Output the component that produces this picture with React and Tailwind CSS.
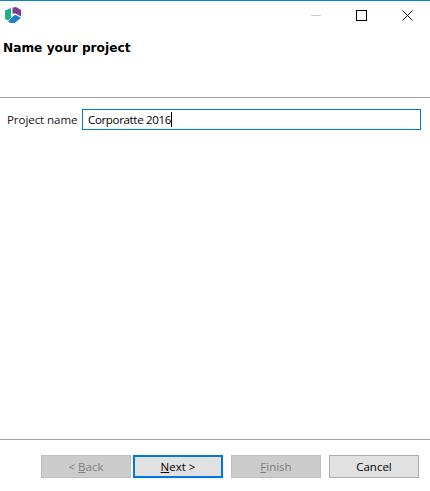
import React from "react";

function WizardButton({ children, disabled, primary, className = "" }) {
  return (
    <button
      disabled={disabled}
      className={`w-[90px] h-[23px] flex items-center justify-center text-[11.5px] leading-none ${
        disabled
          ? "bg-[#cccccc] border border-[#bfbfbf] text-[#7f7f7f]"
          : primary
            ? "bg-[#e1e1e1] border-2 border-[#0078d7] text-black"
            : "bg-[#e1e1e1] border border-[#adadad] text-black"
      } ${className}`}
    >
      {children}
    </button>
  );
}

function Logo() {
  return (
    <svg width="18" height="18" viewBox="4 6 18 18">
      <path d="M5 10.5 L11 8 L11 15 L11.5 17.5 L8 20.5 L5 19 Z" fill="#20b089" />
      <path d="M12.5 7.5 L16 7 L21 10 L21 16.5 L15.5 13.5 L12.5 13.5 Z" fill="#7d3c98" />
      <path d="M14.5 15 L16 15 L21 18 L14.5 23 L10.5 23 L8 21.5 Z" fill="#1e7fc9" />
    </svg>
  );
}

export default function App() {
  return (
    <div className="w-[430px] h-[491px] flex flex-col bg-white border-t border-[#0a84d8] font-['Open_Sans','Noto_Sans',sans-serif] text-[11.5px] text-black overflow-hidden">
      {/* Title bar */}
      <div className="h-[28px] flex items-center justify-between pl-[4px]">
        <Logo />
        <div className="flex items-center">
          <div className="w-[46px] flex justify-center pl-px">
            <div className="w-[10px] h-px bg-[#cccccc]" />
          </div>
          <div className="w-[46px] flex justify-center">
            <div className="w-[11px] h-[11px] border border-black" />
          </div>
          <div className="w-[46px] flex justify-center">
            <svg width="11" height="11" viewBox="0 0 11 11">
              <path d="M0.5 0.5 L10.5 10.5 M10.5 0.5 L0.5 10.5" stroke="#111" strokeWidth="1" fill="none" />
            </svg>
          </div>
        </div>
      </div>

      {/* Header */}
      <div className="h-[69px] border-b border-[#a0a0a0] pl-[3px] pt-[11px]">
        <h1 className="font-['DejaVu_Sans',sans-serif] font-bold text-[12.2px] leading-[16px]">Name your project</h1>
      </div>

      {/* Form */}
      <div className="flex-1 flex items-start pl-[7px] pr-[9px] pt-[11px]">
        <label className="w-[75px] h-[21px] flex items-center text-[#1b1020] tracking-[-0.05px]">Project name</label>
        <div className="flex-1 h-[21px] border border-[#0078d7] flex items-center pl-[5px]">
          <span className="tracking-[-0.33px]">Corporatte 2016</span>
          <span className="w-px h-[15px] bg-black" />
        </div>
      </div>

      {/* Footer */}
      <div className="h-[52px] border-t border-[#a0a0a0] flex items-start pt-[15px] pl-[41px]">
        <WizardButton disabled className="mr-[2px]">
          &lt; <u className="ml-[3px]">B</u>ack
        </WizardButton>
        <WizardButton primary className="mr-[8px]">
          <u>N</u>ext &gt;
        </WizardButton>
        <WizardButton disabled className="mr-[8px]">
          <u>F</u>inish
        </WizardButton>
        <WizardButton>Cancel</WizardButton>
      </div>
    </div>
  );
}
